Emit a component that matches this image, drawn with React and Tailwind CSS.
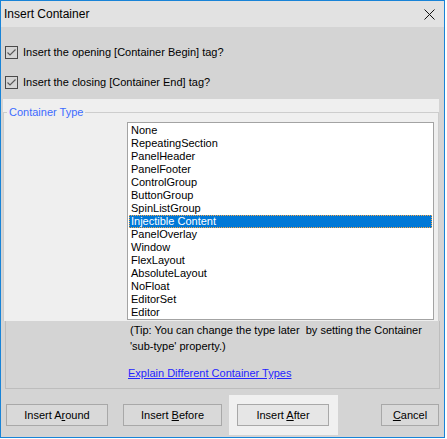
import React from "react";

const containerTypes = [
  "None",
  "RepeatingSection",
  "PanelHeader",
  "PanelFooter",
  "ControlGroup",
  "ButtonGroup",
  "SpinListGroup",
  "Injectible Content",
  "PanelOverlay",
  "Window",
  "FlexLayout",
  "AbsoluteLayout",
  "NoFloat",
  "EditorSet",
  "Editor",
];

function CheckRow({ label, className = "" }) {
  return (
    <div className={`flex items-center h-[13px] pl-[4px] ${className}`}>
      <span className="w-[13px] h-[13px] border border-[#4a4a4a] flex items-center justify-center">
        <svg width="11" height="11" viewBox="0 0 11 11">
          <path d="M1.5 5.5 L4 8 L9.5 2.5" fill="none" stroke="#5a5a5a" strokeWidth="1.2" />
        </svg>
      </span>
      <span className="ml-[5px] text-[11px] leading-[13px] text-black">{label}</span>
    </div>
  );
}

function WinButton({ children, className = "" }) {
  return (
    <button
      className={`h-[22px] border border-[#a8a8a8] text-[11px] text-black flex items-center justify-center ${className}`}
    >
      <span>{children}</span>
    </button>
  );
}

export default function App() {
  const selected = 7;
  return (
    <div className="w-[447px] h-[439px] bg-white" style={{ fontFamily: '"Liberation Sans", Arial, sans-serif' }}>
      <div className="w-[445px] h-[438px] border border-[#1883d7] bg-[#d4d4d4] flex flex-col">
        {/* title bar */}
        <div className="h-[26px] bg-[#e2e2e2] flex items-center justify-between pl-[3px] pr-[9px]">
          <span className="text-[12px] text-black">Insert Container</span>
          <svg width="11" height="11" viewBox="0 0 11 11">
            <path d="M0.5 0.5 L10.5 10.5 M10.5 0.5 L0.5 10.5" stroke="#111" strokeWidth="1" />
          </svg>
        </div>

        <CheckRow className="mt-[19px]" label="Insert the opening [Container Begin] tag?" />
        <CheckRow className="mt-[17px]" label="Insert the closing [Container End] tag?" />

        {/* group box: upper light panel */}
        <div className="mt-[10px] ml-[2px] w-[436px] h-[222px] bg-[#efefef] pt-[13px]">
          <div className="relative h-[209px] border-t border-x border-[#cdcdcd]">
            <span className="absolute -top-[8px] left-[3px] px-[2px] bg-[#efefef] text-[11px] leading-[14px] text-[#3d6bff]">
              Container Type
            </span>
            <div className="mt-[9px] ml-[123px] w-[307px] h-[198px] border border-[#a3a3a3] bg-white p-px">
              {containerTypes.map((t, i) => (
                <div
                  key={t}
                  className={
                    i === selected
                      ? "h-[13px] leading-[11px] pl-[1px] text-[11px] text-white bg-[#0078d7] border border-dotted border-[#f7a74a]"
                      : "h-[13px] leading-[13px] pl-[2px] text-[11px] text-black"
                  }
                >
                  {t}
                </div>
              ))}
            </div>
          </div>
        </div>

        {/* group box: lower part */}
        <div className="ml-[4px] w-[435px] h-[68px] border-x border-b border-[#bdbdbd] pl-[124px] pt-px">
          <div className="text-[11px] leading-[16px] text-black whitespace-pre">
            {"(Tip: You can change the type later  by setting the Container\n'sub-type' property.)"}
          </div>
          <div className="mt-[11px] -ml-[2px] text-[11px] leading-[16px] text-[#2424ff] underline">
            Explain Different Container Types
          </div>
        </div>

        {/* buttons */}
        <div className="mt-[6px] h-[40px] flex items-center pl-[5px]">
          <WinButton className="w-[102px] bg-[#d9d9d9]">
            Insert A<span className="underline">r</span>ound
          </WinButton>
          <WinButton className="ml-[15px] w-[99px] bg-[#d9d9d9]">
            Insert <span className="underline">B</span>efore
          </WinButton>
          <div className="ml-[7px] w-[109px] h-[40px] bg-[#f0f0f0] flex items-center pl-[8px]">
            <WinButton className="w-[92px] bg-[#e6e6e6]">
              Insert <span className="underline">A</span>fter
            </WinButton>
          </div>
          <WinButton className="ml-[43px] w-[58px] bg-[#d9d9d9]">
            <span className="underline">C</span>ancel
          </WinButton>
        </div>
      </div>
    </div>
  );
}
